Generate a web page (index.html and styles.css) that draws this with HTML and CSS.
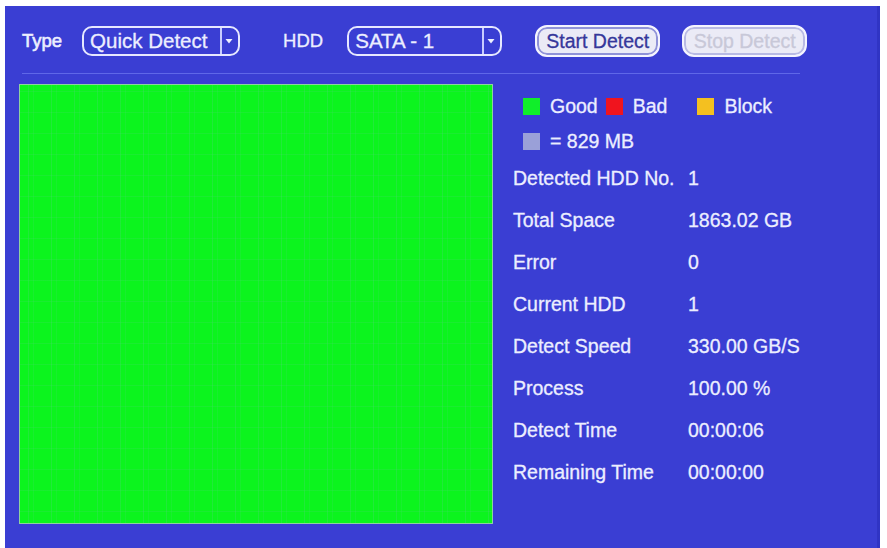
FILE: index.html
```html
<!DOCTYPE html>
<html>

<head>
  <meta name="viewport" content="width=device-width, initial-scale=1">
  <link rel="stylesheet" href="styles.css">
</head>

<body>

  <div class="panel">
    <div class="toolbar">
      <span class="field-label">Type</span>
      <div class="select select-type">
        <span class="select-text">Quick Detect</span>
        <span class="select-arrow">
          <svg width="10" height="8" viewBox="0 0 10 8"><path d="M1.5 2h7L5 6.5z" fill="#eef0ff"/></svg>
        </span>
      </div>

      <span class="field-label hdd-label">HDD</span>
      <div class="select select-hdd">
        <span class="select-text">SATA - 1</span>
        <span class="select-arrow">
          <svg width="10" height="8" viewBox="0 0 10 8"><path d="M1.5 2h7L5 6.5z" fill="#eef0ff"/></svg>
        </span>
      </div>

      <button class="btn btn-start">Start Detect</button>
      <button class="btn btn-stop" disabled>Stop Detect</button>
    </div>

    <hr class="divider">

    <div class="content">
      <div class="disk-map"></div>

      <div class="info">
        <div class="legend">
          <span class="legend-item item-good"><i class="swatch good"></i>Good</span>
          <span class="legend-item item-bad"><i class="swatch bad"></i>Bad</span>
          <span class="legend-item"><i class="swatch block"></i>Block</span>
        </div>
        <div class="legend legend-unit">
          <span class="legend-item"><i class="swatch unit"></i>= 829 MB</span>
        </div>

        <div class="row"><span class="label">Detected HDD No.</span><span class="value">1</span></div>
        <div class="row"><span class="label">Total Space</span><span class="value">1863.02 GB</span></div>
        <div class="row"><span class="label">Error</span><span class="value">0</span></div>
        <div class="row"><span class="label">Current HDD</span><span class="value">1</span></div>
        <div class="row"><span class="label">Detect Speed</span><span class="value">330.00 GB/S</span></div>
        <div class="row"><span class="label">Process</span><span class="value">100.00 %</span></div>
        <div class="row"><span class="label">Detect Time</span><span class="value">00:00:06</span></div>
        <div class="row"><span class="label">Remaining Time</span><span class="value">00:00:00</span></div>
      </div>
    </div>
  </div>

</body>

</html>
```

FILE: styles.css
```css
body {
  margin: 0;
  background-color: white;
  font-family: "Liberation Sans", Arial, Helvetica, sans-serif;
}

* {
  box-sizing: border-box;
}

/* Main blue window */
.panel {
  margin: 6px 7px 0 5px;
  height: 542px;
  background-color: #3a3ed3;
  border-right: 3px solid #3034c4;
  color: #eceeff;
  -webkit-text-stroke: 0.3px currentColor;
}

/* Top bar with selectors and buttons */
.toolbar {
  display: flex;
  align-items: center;
  height: 67px;
  padding: 3px 0 0 17px;
}

.field-label {
  font-size: 18.5px;
  margin-right: 20px;
  -webkit-text-stroke: 0.6px currentColor;
}

.hdd-label {
  margin-left: 43px;
  margin-right: 24px;
  -webkit-text-stroke: 0.3px currentColor;
}

.select {
  display: flex;
  align-items: stretch;
  height: 30px;
  border: 2px solid #e6e8ff;
  border-radius: 10px;
}

.select-type {
  width: 158px;
}

.select-hdd {
  width: 155px;
}

.select-text {
  flex: 1;
  padding-left: 6px;
  font-size: 20.5px;
  line-height: 26px;
  white-space: nowrap;
}

.select-arrow {
  display: flex;
  align-items: center;
  justify-content: center;
  width: 18px;
  border-left: 2px solid #c8ccff;
  padding-right: 2px;
}

.btn {
  height: 32px;
  padding: 0;
  border: 2px solid #f4f4ff;
  border-radius: 12px;
  box-shadow: inset 0 0 0 2px #8f92d8;
  background-color: #ebebf6;
  font-family: inherit;
  font-size: 19.5px;
  white-space: nowrap;
}

.btn-start {
  width: 125px;
  margin-left: 33px;
  color: #35379a;
  -webkit-text-stroke: 0.3px #35379a;
}

.btn-stop {
  width: 125px;
  margin-left: 22px;
  color: #c8c8d8;
  box-shadow: inset 0 0 0 2px #b8bae4;
}

/* Thin line under toolbar */
.divider {
  margin: 0 77px 0 17px;
  border: none;
  border-top: 1px solid #5f67e8;
}

.content {
  display: flex;
  padding: 10px 0 0 14px;
}

/* Green block map of the disk */
.disk-map {
  width: 474px;
  height: 440px;
  border: 1px solid #8fd0a0;
  background-color: #0cf41e;
  background-image:
    repeating-linear-gradient(90deg, transparent 0 8px, rgba(80, 210, 120, 0.3) 8px 9px, transparent 9px 13px, rgba(80, 210, 120, 0.18) 13px 14px, transparent 14px 23px),
    repeating-linear-gradient(0deg, transparent 0 11px, rgba(80, 210, 120, 0.2) 11px 12px, transparent 12px 21px);
}

.info {
  padding: 10px 0 0 20px;
  font-size: 19.5px;
}

.legend {
  display: flex;
  align-items: center;
  height: 24px;
  padding-left: 10px;
}

.legend-unit {
  margin-top: 11px;
}

.legend-item {
  display: flex;
  align-items: center;
}

.item-good {
  margin-right: 8px;
}

.item-bad {
  margin-right: 30px;
}

.swatch {
  display: inline-block;
  width: 17px;
  height: 17px;
  margin-right: 10px;
}

.good {
  background-color: #10ee2a;
}

.bad {
  background-color: #f0141e;
}

.block {
  background-color: #f4c020;
}

.unit {
  background-color: #9aa0d8;
}

.row {
  display: flex;
  align-items: center;
  height: 42px;
}

.legend-unit + .row {
  margin-top: 4px;
}

.label {
  width: 175px;
}
```
